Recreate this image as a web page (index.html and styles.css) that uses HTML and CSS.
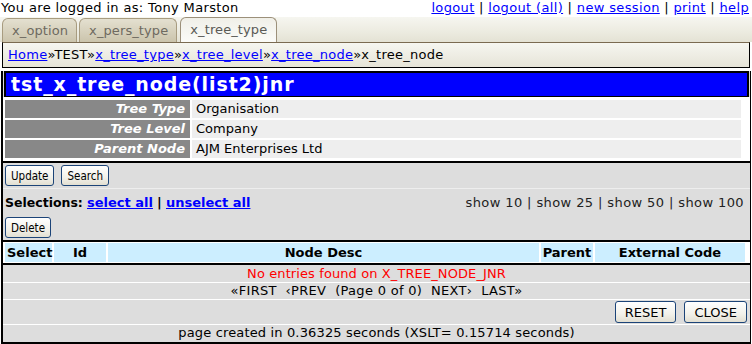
FILE: index.html
```html
<!DOCTYPE html>
<html>
<head>
<meta charset="utf-8">
<link rel="stylesheet" href="styles.css">
</head>
<body>
<div class="topbar">
  <span class="user">You are logged in as: Tony Marston</span>
  <span class="links"><a href="#">logout</a> | <a href="#">logout (all)</a> | <a href="#">new session</a> | <a href="#">print</a> | <a href="#">help</a></span>
</div>
<div class="tabs">
  <div class="tab">x_option</div>
  <div class="tab">x_pers_type</div>
  <div class="tab active">x_tree_type</div>
</div>
<div class="crumbs"><a href="#">Home</a>»TEST»<a href="#">x_tree_type</a>»<a href="#">x_tree_level</a>»<a href="#">x_tree_node</a>»x_tree_node</div>
<div class="main">
  <div class="title">tst_x_tree_node(list2)jnr</div>
  <div class="details">
    <div class="lbl">Tree Type</div><div class="val">Organisation</div>
    <div class="lbl">Tree Level</div><div class="val">Company</div>
    <div class="lbl">Parent Node</div><div class="val">AJM Enterprises Ltd</div>
  </div>
  <div class="actbar">
    <button class="btn">Update</button>
    <button class="btn">Search</button>
  </div>
  <div class="selbar">
    <div class="selrow">
      <span class="sel"><b>Selections:</b> <a href="#">select all</a> <b>|</b> <a href="#">unselect all</a></span>
      <span class="show">show 10 | show 25 | show 50 | show 100</span>
    </div>
    <div class="delrow"><button class="btn">Delete</button></div>
  </div>
  <div class="thead">
    <div class="th left">Select</div>
    <div class="th">Id</div>
    <div class="th">Node Desc</div>
    <div class="th">Parent</div>
    <div class="th">External Code</div>
  </div>
  <div class="row msg">No entries found on X_TREE_NODE_JNR</div>
  <div class="row nav">«FIRST &nbsp;‹PREV &nbsp;(Page 0 of 0) &nbsp;NEXT› &nbsp;LAST»</div>
  <div class="row btns">
    <button class="btn2">RESET</button>
    <button class="btn2">CLOSE</button>
  </div>
  <div class="row foot">page created in 0.36325 seconds (XSLT= 0.15714 seconds)</div>
</div>
</body>
</html>
```
FILE: styles.css
```css
* { box-sizing: border-box; }
body {
  margin: 0;
  font-family: "DejaVu Sans", Verdana, sans-serif;
  font-size: 13px;
  color: #000;
  background: #fff;
  width: 752px;
  overflow: hidden;
}
a { color: #0000ff; text-decoration: underline; }
.topbar {
  height: 17px;
  display: flex;
  justify-content: space-between;
  align-items: flex-start;
  padding: 0 3px 0 1px;
  font-size: 13px;
  line-height: 15px;
  letter-spacing: 0.35px;
  white-space: nowrap;
}
.links { color: #000; }
.tabs {
  height: 25px;
  display: flex;
  align-items: flex-end;
  padding-left: 2px;
  gap: 2px;
  background: linear-gradient(#f6f6f0, #ecebe0 60%, #e4e2d4);
}
.tab {
  height: 24px;
  padding: 0 8px 0 9px;
  font-size: 13px;
  line-height: 24px;
  letter-spacing: 0.1px;
  color: #6e6a60;
  background: linear-gradient(#e4e0d0, #cbc4ac);
  border: 1px solid #a89c80;
  border-bottom: none;
  border-radius: 6px 6px 0 0;
}
.tab.active {
  height: 25px;
  margin-left: 1px;
  padding: 0 9px;
  color: #5a5a55;
  background: linear-gradient(#f0efe8, #fbfbf8);
  border-color: #9c907a;
}
.crumbs {
  height: 26px;
  margin: 0 2px 0 2px;
  padding-left: 5px;
  line-height: 24px;
  font-size: 13px;
  letter-spacing: 0.25px;
  white-space: nowrap;
  border: 1px solid #000;
  border-top-color: #7a6a50;
  background: linear-gradient(#f6f6f0, #e6e4d8);
}
.main {
  margin: 0 1px 0 1px;
  border: 2px solid #000;
  border-top: none;
  border-right-width: 1px;
  background: #dddddd;
}
.title {
  margin: 3px 1px 0 1px;
  height: 26px;
  padding-left: 5px;
  background: #0000ff;
  border: 2px solid #000;
  border-bottom-width: 1px;
  color: #fff;
  font-weight: bold;
  font-size: 19px;
  letter-spacing: 0.9px;
  line-height: 22px;
  white-space: nowrap;
}
.details {
  display: grid;
  grid-template-columns: 185px 549px;
  gap: 2px;
  padding: 3px 6px 3px 2px;
  background: #fff;
  border-bottom: 2px solid #000;
}
.lbl, .val { height: 18px; line-height: 18px; font-size: 13px; }
.lbl {
  background: #888888;
  color: #fff;
  font-weight: bold;
  font-style: italic;
  text-align: right;
  padding-right: 5px;
}
.val {
  background: #eeeeee;
  padding-left: 4px;
}
.actbar {
  height: 26px;
  padding: 2px 2px 0 2px;
  display: flex;
  gap: 7px;
  border-bottom: 1px solid #eeeeee;
}
.btn {
  height: 21px;
  padding: 0 5px;
  font-family: "DejaVu Sans Condensed", "DejaVu Sans", sans-serif;
  font-size: 11.5px;
  color: #000;
  background: linear-gradient(#ffffff, #f2f1ea 60%, #e2dfd2);
  border: 1px solid #1c4478;
  border-radius: 3px;
}
.selbar {
  border-bottom: 2px solid #000;
}
.selrow {
  height: 25px;
  display: flex;
  justify-content: space-between;
  align-items: center;
  padding: 1px 6px 0 2px;
  white-space: nowrap;
}
.sel { font-size: 13px; }
.sel b:first-child { font-size: 12.5px; }
.sel a { font-weight: bold; }
.show { color: #222; font-size: 13px; letter-spacing: 0.4px; }
.delrow {
  height: 26px;
  padding: 3px 2px 0 2px;
}
.thead {
  display: grid;
  grid-template-columns: 47px 52px 431px 52px 150px;
  gap: 2px;
  padding: 1px 2px;
  background: #fff;
  border-bottom: 2px solid #000;
}
.th {
  height: 19px;
  line-height: 19px;
  background: #cceeff;
  font-weight: bold;
  font-size: 13px;
  text-align: center;
  white-space: nowrap;
}
.th.left { text-align: left; padding-left: 2px; }
.row {
  text-align: center;
  border-bottom: 1px solid #fff;
  white-space: nowrap;
}
.row:last-child { border-bottom: none; }
.msg { height: 18px; line-height: 17px; color: #ff0000; letter-spacing: 0.1px; }
.nav { height: 17px; line-height: 16px; letter-spacing: 0.3px; }
.btns {
  height: 25px;
  display: flex;
  justify-content: flex-end;
  gap: 8px;
  padding: 1px 3px 0 0;
}
.btn2 {
  height: 22px;
  padding: 0 9px;
  font-family: "DejaVu Sans", sans-serif;
  font-size: 13px;
  color: #000;
  background: linear-gradient(#ffffff, #f2f1ea 60%, #e2dfd2);
  border: 1px solid #1c4478;
  border-radius: 3px;
}
.foot { height: 17px; line-height: 16px; letter-spacing: 0.15px; }
```
